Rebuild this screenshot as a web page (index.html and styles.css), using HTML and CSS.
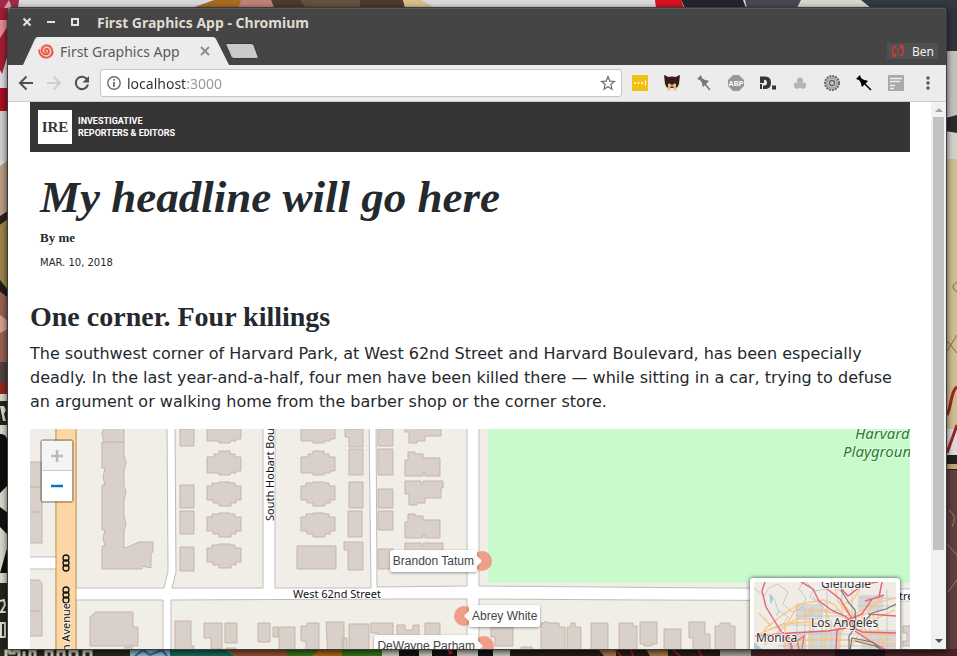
FILE: index.html
```html
<!DOCTYPE html>
<html lang="en">
<head>
<meta charset="utf-8">
<meta name="viewport" content="width=device-width, initial-scale=1">
<title>First Graphics App</title>
<link rel="stylesheet" href="styles.css">
</head>
<body>
<svg class="wallpaper" viewBox="0 0 957 656" preserveAspectRatio="none" aria-hidden="true">
  <rect width="957" height="656" fill="#d9d9dc"/>
  <!-- top strip -->
  <path d="M0 0h19l-1 8H0z" fill="#a02a48"/><path d="M9 0l3 8H4z" fill="#d9a0b0"/>
  <path d="M192 8l22-8h27v8z" fill="#a96b20"/><path d="M241 0h30l3 8h-36z" fill="#c08078"/><path d="M271 0h132l3 8H274z" fill="#4d3a2a"/><path d="M300 0h60v8h-54z" fill="#66503d"/><path d="M403 0h18l14 8h-30z" fill="#d9bd8b"/>
  <path d="M655 0h26l3 8h-28z" fill="#d8101c"/><path d="M681 0h62l3 8h-61z" fill="#24262c"/><path d="M745 0h56l-4 8h-50z" fill="#474a52"/><path d="M803 0h58l10 8h-74z" fill="#d7d5cf"/><path d="M861 0h96v8h-86z" fill="#333941"/>
  <!-- left strip -->
  <path d="M0 8h8v46l-6 20-2-4z" fill="#a41c34"/><path d="M0 20h8v6l-8 12z" fill="#e48a98"/><path d="M0 88h8v23H0z" fill="#a80f22"/><path d="M0 111h8v50H0z" fill="#cfcdcd"/>
  <path d="M0 166l8-6v60l-8 8z" fill="#b79c80"/><path d="M0 216l8-5v8l-8 6z" fill="#29201a"/><path d="M0 225l8-6v70l-8-5z" fill="#9c854b"/><path d="M0 280l8 10v8l-8-6z" fill="#251b17"/><path d="M0 292l8 6v65H0z" fill="#976051"/><path d="M0 315l8 6v8l-8 4z" fill="#d2a08a"/><path d="M0 362h8v20H0z" fill="#50413b"/><path d="M0 382h8v12H0z" fill="#8c2820"/><path d="M0 394h8v7H0z" fill="#d5d5c9"/><path d="M0 401h8v24H0z" fill="#1c2a1d"/><path d="M0 406h4l2 4-2 4 2 7H3z" fill="#dad9cc"/><path d="M0 425h8v231H0z" fill="#d6d7cb"/><path d="M0 434c8 0 8 8 8 15v36l-8 8z" fill="#0b100d"/><path d="M0 507l8 6v22l-8-8z" fill="#10130f"/><path d="M8 545v28H0z" fill="#0b100d"/><path d="M0 583h8v73H0z" fill="#23261d"/><path d="M0 601l4-1 1 5-4 7h5M1 623h4v14H1z" fill="none" stroke="#dadbc9" stroke-width="2"/>
  <!-- right strip -->
  <path d="M945 8h12v43h-12z" fill="#30343b"/><path d="M945 51h12v65h-12z" fill="#c2c1be"/><path d="M945 118l12-3v18l-12-2z" fill="#292b2c"/><path d="M945 133h12v26h-12z" fill="#d2d0ca"/><path d="M945 159h12v270h-12z" fill="#cdbc94"/><path d="M957 282q-8 5 0 10M947 341l10 12M957 335l-10 16" fill="none" stroke="#806743"/><path d="M947 415c4-6 4-25 10-28M947 453l10-28" fill="none" stroke="#9e281f" stroke-width="3"/><path d="M945 455h12v15h-12z" fill="#251f1e"/><path d="M945 464h12v5h-12z" fill="#c3a773"/><path d="M945 470h12v186h-12z" fill="#5e403d"/><path d="M949 510q9 6 3 17M947 544l10 11M957 580l-9 12" fill="none" stroke="#95817a"/>
  <!-- bottom strip -->
  <path d="M0 649h130v7H0z" fill="#27291f"/><path d="M6 656v-5h4v2h4v-2h5v5m5 0v-5m6 5v-5h5v5m11 0v-5h6v5m6 0v-5h6v5m6 0v-5h7v5m7 0v-5h7v5" fill="none" stroke="#d3d2bc" stroke-width="3"/><path d="M130 649h40v7h-40z" fill="#8db7cb"/><path d="M135 656l8-6 7 5 12-5 5 6" fill="none" stroke="#306d9d" stroke-width="2"/><path d="M170 649h55l10 7h-65z" fill="#126b58"/><path d="M225 649h62v7h-52z" fill="#955032"/><path d="M287 649h95v7h-95z" fill="#34761b"/><path d="M320 649h22v7h-30z" fill="#ad6416"/><path d="M382 649h128v7H382z" fill="#c9c8bd"/><path d="M399 649h20v7h-20zM432 649h25v7h-25zM478 649h15v7h-15z" fill="#101313"/><path d="M449 649l2 5" stroke="#be1822" stroke-width="4"/><path d="M510 649h210v7H510z" fill="#241c17"/><path d="M598 649h18v7h-12zM646 649h22v7h-18z" fill="#a67646"/><path d="M616 650l5 6m10-6 2 6m40-6 7 6m18-6 4 6" stroke="#981f17" stroke-width="2"/><path d="M720 649h31v7h-31z" fill="#a6a296"/><path d="M751 649h206v7H751z" fill="#4a2326"/><path d="M835 649h50v7h-50z" fill="#201619"/>
</svg>

<div class="window">
  <header class="titlebar">
    <button class="win-btn" aria-label="Close"><svg width="10" height="10" viewBox="0 0 10 10"><path d="M1.500 1.500l7 7m0-7l-7 7" stroke="#e4e3df" stroke-width="2"/></svg></button>
    <button class="win-btn" aria-label="Minimize"><svg width="10" height="10" viewBox="0 0 10 10"><path d="M1 5h8" stroke="#e4e3df" stroke-width="2"/></svg></button>
    <button class="win-btn" aria-label="Maximize"><svg width="10" height="10" viewBox="0 0 10 10"><path d="M2 2h6v6H2z" fill="none" stroke="#e4e3df" stroke-width="2"/></svg></button>
    <span class="window-title">First Graphics App - Chromium</span>
  </header>

  <div class="tabstrip">
    <div class="tab">
      <svg class="tab-shape" width="206" height="28" viewBox="0 0 206 28" aria-hidden="true"><path d="M0 28L12 2q1-2 3-2h175q2 0 3 2l13 26z" fill="#ececec"/></svg>
      <svg class="favicon" width="16" height="16" viewBox="0 0 16 16" aria-hidden="true"><circle cx="8" cy="8" r="7.300" fill="#f7cdc5"/><path d="M8.500 8.300c-.5 1-1.800.3-1.600-.9.200-1.800 2.700-2 3.600-.5 1.200 2-.4 4.500-2.900 4.400-3.200-.1-4.600-3.300-3.400-6 1.400-3 5.400-3.700 8-1.600 2.800 2.300 2.800 6.500.5 9M15 9c-.8 3.500-4 6-7.500 5.600C3.500 14.200.8 10.500 1.200 6.600" fill="none" stroke="#e75b4c" stroke-width="1.900"/></svg>
      <span class="tab-title">First Graphics App</span>
      <button class="tab-close" aria-label="Close tab"><svg width="10" height="10" viewBox="0 0 10 10"><path d="M1 1l8 8m0-8L1 9" stroke="#8b8b8b" stroke-width="1.800"/></svg></button>
    </div>
    <button class="new-tab" aria-label="New tab"><svg width="34" height="16" viewBox="0 0 34 16"><path d="M1 .5h25q2 0 3 2l4 11q.5 2-1.500 2H9q-2 0-3-2L1 2Q.5.500 1 .5z" fill="#c9c9c9" stroke="#3a3a3a"/></svg></button>
    <button class="profile"><svg width="14" height="12" viewBox="0 0 14 12" aria-hidden="true"><path d="M5 1C1 2 .5 8 3.500 10.500M1 11h3.500V8M9 11c4-1 4.500-7 1.500-9.500M13 1H9.500v3" fill="none" stroke="#d23a2b" stroke-width="1.300"/><path d="M7 3v4m0 1v1.500" stroke="#d23a2b" stroke-width="1.300"/></svg>Ben</button>
  </div>

  <nav class="toolbar" aria-label="Browser toolbar">
    <button class="tool" aria-label="Back"><svg width="16" height="16" viewBox="0 0 16 16"><path d="M15 8H2m6.500-6.500L2 8l6.500 6.500" fill="none" stroke="#505050" stroke-width="2"/></svg></button>
    <button class="tool" aria-label="Forward"><svg width="16" height="16" viewBox="0 0 16 16"><path d="M1 8h13M7.500 1.500L14 8l-6.500 6.500" fill="none" stroke="#cfcfcf" stroke-width="2"/></svg></button>
    <button class="tool" aria-label="Reload"><svg width="16" height="16" viewBox="0 0 16 16"><path d="M13.200 4.500A6.200 6.200 0 1 0 14 9.500" fill="none" stroke="#505050" stroke-width="2"/><path d="M15 1v6.500H8.500z" fill="#505050"/></svg></button>
    <div class="omnibox">
      <svg width="14" height="14" viewBox="0 0 14 14" aria-hidden="true"><circle cx="7" cy="7" r="6.200" fill="none" stroke="#6b6b6b" stroke-width="1.400"/><path d="M7 3v1.800M7 6v4.700" stroke="#6b6b6b" stroke-width="1.800"/></svg>
      <input class="url" type="text" value="localhost:3000" aria-label="Address">
      <button class="star" aria-label="Bookmark"><svg width="16" height="16" viewBox="0 0 16 16"><path d="M8 1.800l1.800 4.300 4.600.4-3.500 3.100 1 4.600L8 11.800l-3.900 2.400 1-4.600L1.600 6.500l4.600-.4z" fill="none" stroke="#707070" stroke-width="1.300"/></svg></button>
    </div>
    <div class="extensions">
      <button class="tool" aria-label="Password manager"><svg width="16" height="16" viewBox="0 0 16 16"><rect width="16" height="16" rx="1" fill="#f0c20f"/><circle cx="3" cy="8" r="1" fill="#fff"/><circle cx="6.500" cy="8" r="1" fill="#fff"/><circle cx="10" cy="8" r="1" fill="#fff"/><path d="M13.500 5.500v5" stroke="#fff"/></svg></button>
      <button class="tool" aria-label="Cat"><svg width="16" height="16" viewBox="0 0 16 16"><path d="M0 0q3 1 4 2 4-1 8 0 1-1 4-2l-1 9q-1 3-3 4H4Q2 12 1 9z" fill="#3a1b16"/><path d="M4 9l1-1 3 2 3-2 1 1v3H4z" fill="#c48d6d"/><path d="M4 9.500h2.500V11H4zm5.500 0H12V11H9.500z" fill="#e4ddd5"/><path d="M5.500 12l-1 3.500m6-3.500l1 3.500" stroke="#efbc96" stroke-width="3"/></svg></button>
      <button class="tool" aria-label="Pin"><svg width="16" height="16" viewBox="0 0 16 16"><path d="M1 4l4-4 1 3 3 2q2 0 4 1l-6 6q-1-2-1-4L4 5z" fill="#777"/><path d="M9 9l5 6" stroke="#777" stroke-width="1.500"/></svg></button>
      <button class="tool" aria-label="Ad blocker"><svg width="16" height="16" viewBox="0 0 16 16"><path d="M5 0h6l5 5v6l-5 5H5l-5-5V5z" fill="#969696"/><text x="8" y="11" text-anchor="middle" class="abp">ABP</text></svg></button>
      <button class="tool" aria-label="Disconnect"><svg width="18" height="16" viewBox="0 0 18 16"><path d="M1 1.500h5q6 0 6 6.200 0 6.300-6 6.300H4v-3.500q4 .5 4-2.800 0-3-3-3V8H1z" fill="#303639"/><path d="M1 9h2v5H1zM13 10.500h4v4h-4z" fill="#303639"/></svg></button>
      <button class="tool" aria-label="Clover"><svg width="16" height="16" viewBox="0 0 16 16"><g fill="#b4b4b4"><circle cx="8" cy="5.500" r="3"/><circle cx="5" cy="10.500" r="3.200"/><circle cx="11" cy="10.500" r="3.200"/><path d="M6 6h4v7H6z"/></g></svg></button>
      <button class="tool" aria-label="Gear"><svg width="16" height="16" viewBox="0 0 16 16"><circle cx="8" cy="8" r="7" fill="#c2c2c2" stroke="#666" stroke-width="2" stroke-dasharray="2 1"/><circle cx="8" cy="8" r="5" fill="none" stroke="#999"/><circle cx="8" cy="8" r="2.500" fill="#ccc" stroke="#666" stroke-width="1.300"/></svg></button>
      <button class="tool" aria-label="Pin page"><svg width="16" height="16" viewBox="0 0 16 16"><path d="M0 4l4-4 1 3 3 2q2 0 4 1l-6 6q-1-2-1-4L3 5z" fill="#000"/><path d="M8 8l7 7" stroke="#000" stroke-width="1.500"/></svg></button>
      <button class="tool" aria-label="Reader"><svg width="16" height="16" viewBox="0 0 16 16"><rect width="16" height="16" rx="1" fill="#a9a9a9"/><path d="M2 3.500h12M2 6.500h10M2 10.500h5M2 13.500h4" stroke="#eee" stroke-width="1.500"/></svg></button>
      <button class="tool" aria-label="Menu"><svg width="16" height="16" viewBox="0 0 16 16"><g fill="#555"><circle cx="8" cy="3" r="1.700"/><circle cx="8" cy="8" r="1.700"/><circle cx="8" cy="13" r="1.700"/></g></svg></button>
    </div>
  </nav>

  <div class="viewport">
    <main class="page">
      <div class="brandbar">
        <a class="brand" href="#"><span class="brand-mark">IRE</span><span class="brand-name">INVESTIGATIVE<br>REPORTERS &amp; EDITORS</span></a>
      </div>
      <header class="story-head">
        <h1>My headline will go here</h1>
        <p class="byline">By me</p>
        <p class="date">MAR. 10, 2018</p>
      </header>
      <section class="story">
        <h2>One corner. Four killings</h2>
        <p>The southwest corner of Harvard Park, at West 62nd Street and Harvard Boulevard, has been especially deadly. In the last year-and-a-half, four men have been killed there — while sitting in a car, trying to defuse an argument or walking home from the barber shop or the corner store.</p>
      </section>
      <div class="map">
        <svg class="tiles" viewBox="30 429 880 220" preserveAspectRatio="xMinYMin slice" role="img" aria-label="Street map">
          <defs>
            <path id="house-a" d="M-17-7h7v-3h5v-3H6v3h5v3h6V7h-5v2H6v2H-5V9h-12z"/>
            <path id="house-b" d="M-17-8h5v-3h7v-1H6v1h5v3h6V6h-5v3H7v3H-5V9h-6V6h-6z"/>
            <path id="house-c" d="M-16-12h7v2h8v4h17V12H1V9h-2v3h-18V-4h3z"/>
            <path id="house-d" d="M-19-12h16v3h2v-3h20v7h-2V5H1v5h-8v2h-8v-11h-4z"/>
          </defs>
          <rect x="30" y="429" width="880" height="220" fill="#fff"/>
          <g fill="#f1eee8" stroke="#bdbdbd">
            <path d="M20 420h36v137H20zM20 569h36v90H20z"/>
            <path d="M76 420h91l1 151-4 17H76z"/>
            <path d="M175 420h88v168h-91l4-16z"/>
            <path d="M275 420h94l2 168h-96z"/>
            <path d="M376 420h91v166l-90 1z"/>
            <path d="M479 420h441v169l-200-1-241-2z"/>
            <path d="M76 600h87v60H76z"/>
            <path d="M171 600l222-1h74v61H171z"/>
            <path d="M479 599l170 1 271 1v60H479z"/>
          </g>
          <path d="M56 429h20v220H56" fill="#fcd6a4"/><path d="M56 429v220M76 429v220" stroke="#c5974c"/>
          <path d="M488 429h422v154H488z" fill="#c8facc"/>
          <g fill="#d9d0c9" stroke="#c5b5a9">
            <path d="M20 462h22v81H20zM20 487h22M20 512h22M20 580h19l3 3v53H20zM20 611h22"/>
            <path d="M105 420h19v35l2 8-2 7v16l2 6-2 8v16l2 8-2 7v17l4-1 11-5h14v10l-2 1v15l-9-2v3h-40v-23h3l-2-8 2-8h-3v-45h3l-2-8 2-9h-3v-26h2l-2-8zM104 442h20"/>
            <path d="M96 612h37v15h5v19H90v-29zM125 650v-3h7v3z"/>
            <path d="M180 429h14v17h-14zM180 485h14v23h-14zM180 511h14v23h-14zM180 547h14v24h-14z"/>
            <use href="#house-a" x="224" y="432"/><use href="#house-a" x="224" y="464"/><use href="#house-b" x="224" y="494"/><use href="#house-b" x="224" y="525"/><use href="#house-b" x="224" y="556"/>
            <use href="#house-a" x="318" y="432"/><use href="#house-a" x="318" y="464"/><use href="#house-b" x="318" y="494"/><use href="#house-b" x="318" y="525"/>
            <path d="M297 546h39v23h-39zM345 429h18v18h-14v-10h-4zM349 449h14v26h-14zM349 482h14v26h-14zM348 511h14v26h-14zM344 542h19v28h-15v-20h-4z"/>
            <path d="M378 429h15v17h-15zM378 449h15v26h-15zM378 489h15v19h-15zM378 511h15v19h-15zM378 549h15v20h-15z"/>
            <use href="#house-d" x="424" y="431"/><use href="#house-c" x="424" y="464"/><use href="#house-d" x="424" y="493"/><use href="#house-c" x="424" y="526"/><use href="#house-d" x="424" y="555"/>
            <path d="M204 623h18v26h-11v-11h-7zM225 623h12v20h-12zM175 621h16v25h3v10h-19zM226 648h10v8h-10z"/>
            <path d="M258 623h12v19h-12zM273 627h5v10h-5zM279 627h16v30h-16zM301 626h6v-3h12v34h-13v-16h-5zM326 622h18v17l-2 18h-14zM342 638h5v18h-5zM349 624h20v33h-20zM371 623h22v35h-15v-25h-7zM397 625h8v5h8v-5h6v34h-22zM425 623h15v34h-12v-14h-3z"/>
            <path d="M491 627h22v19h-18v-9h-4zM541 623h3v-1h4v1h11v4h6v30h-24zM567 627h4v-4h4v4h6v30h-14zM591 623h17v35h-17zM619 623h14v3h4v31h-18zM640 622h17v22h-5v2h-8v-2h-4zM664 629h17v28h-17zM689 622h16v12h5v24h-17v-20h-4zM715 626h5v-3h10v3h5v33h-20zM521 647h11v8h-11zM903 626h8v20h-8v-5h4v-8h-4z"/>
          </g>
          <g fill="none" stroke="#111" stroke-width="1.300"><rect x="63" y="555" width="6" height="6" rx="3"/><rect x="63" y="560" width="6" height="6" rx="3"/><rect x="63" y="565" width="6" height="6" rx="3"/><rect x="63" y="587" width="6" height="6" rx="3"/><rect x="63" y="592" width="6" height="6" rx="3"/><rect x="63" y="597" width="6" height="6" rx="3"/></g>
          <g class="street">
            <text x="337" y="598" text-anchor="middle">West 62nd Street</text>
            <text x="893" y="600">Street</text>
            <text transform="translate(274 521) rotate(-90)">South Hobart Boulevard</text>
            <text transform="translate(70 603) rotate(-90)" text-anchor="end">Western Avenue</text>
          </g>
          <g class="park"><text x="855" y="439">Harvard</text><text x="843" y="457">Playground</text></g>
          <g fill="#ee8f75" fill-opacity=".85"><circle cx="482" cy="561" r="10"/><circle cx="464" cy="616" r="10"/><circle cx="484" cy="646" r="10"/></g>
        </svg>
        <div class="zoom">
          <button class="zoom-btn" disabled aria-label="Zoom in"><svg width="12" height="12" viewBox="0 0 12 12"><path d="M6 0v12M0 6h12" stroke="#bbb" stroke-width="2.500"/></svg></button>
          <button class="zoom-btn" aria-label="Zoom out"><svg width="12" height="12" viewBox="0 0 12 12"><path d="M0 6h12" stroke="#0078c0" stroke-width="2.500"/></svg></button>
        </div>
        <span class="tip tip-left tip-tatum">Brandon Tatum</span>
        <span class="tip tip-right tip-white">Abrey White</span>
        <span class="tip tip-left tip-parham">DeWayne Parham</span>
        <div class="minimap">
          <svg viewBox="754 582 142 142" width="142" height="142" role="img" aria-label="Los Angeles overview map">
            <rect x="754" y="582" width="142" height="142" fill="#efece6"/>
            <g fill="#d8d7d4"><path d="M796 604h26v16h-26zM808 630h32v20h-32zM858 595h25v16h-25zM783 634h23v15h-23zM863 630h33v20h-33z"/></g>
            <path d="M754 642l8 7v5h-8z" fill="#a8ccdb"/><path d="M770 594l3 4-2 5zM853 583l4 2M837 589l5 3M779 611l-3 5" stroke="#9acbe0" stroke-width="1" fill="#9acbe0"/>
            <g fill="none" stroke="#c8c8c8"><path d="M754 588l10 8 5-8 9-4 10 8-5 12 9 8 11-5 3-9-7-9 4-7 10 7-3 8 12 8 9-4M774 598l4 12 10 7-6 9-12 3M813 596l10 11 8 15M806 582l9 9 12-2M827 582v25M832 587h20v29M842 582v36M797 604v47M805 607v43M813 607v43M822 607v43M796 610h42M796 616h54M784 625h66M784 634h110M780 640h110M778 646h117M831 620v31M840 620v31M862 610v40M870 606v44M878 605v44M887 590v60M860 598h35M858 606h38"/></g>
            <g fill="none" stroke="#fac57f" stroke-width="1.300"><path d="M755 646l11-18 15-12 18-12 24-4 12 5 17 22 17 7 28 2M759 634l24-10 26-2 31 7 20-3 35-16M764 645l22-20 28-15 27 4 18 13M785 649v-22l14-23M810 651v-43M825 651l2-46M838 651l3-18 13-18 20-12 22-5M834 583l4 18 14 18 15-6 12-13 3-18M842 605l11-5 10-16M850 649l12-20M870 649l-5-20-20-23M884 646l-12-33M791 641l40-2 65 5M759 613l12 13"/></g>
            <g fill="none" stroke="#e4647f" stroke-width="1.400"><path d="M765 582l-3 9 4 16 11 18 7 11 8 10v5M801 582l12 7 6 12 14 10 12 5 8 7M822 585l18 14 11 18 2 11 9 4 34 1M755 636l35-3 38-2 18-3M836 651l1-20 10-11 15-6 10-15 12-4M838 585l10 11 16-12 14-2M882 582l-3 15-14 4M855 631l15 10 18 10M868 614l28 2"/></g>
            <path d="M799 649l-2-8 7-5-2 13M784 641l2-4 5 1v12" fill="none" stroke="#ed705f" stroke-width="1.300"/>
            <g fill="none" stroke="#777" stroke-width="1.200"><path d="M841 590l8 13 6 7 1 16-7 10v15M850 650l2-12 20 4 10 8M860 627l12-14 14-4 10-5M855 641l20 5 10 5"/></g>
            <g class="city"><text x="821" y="588">Glendale</text><text x="811" y="627">Los Angeles</text><text x="756" y="642">Monica</text></g>
          </svg>
        </div>
      </div>
    </main>
    <div class="scrollbar" aria-hidden="true"><i class="arrow up"></i><i class="thumb"></i><i class="arrow down"></i></div>
  </div>
</div>
</body>
</html>
```
FILE: styles.css
```css
* { box-sizing: border-box; }
html, body { height: 100%; }
body {
  margin: 0;
  padding: 8px 11px 7px 8px;
  overflow: hidden;
  font-family: "DejaVu Sans", sans-serif;
  color: #24292e;
}
button { padding: 0; border: 0; background: none; font: inherit; color: inherit; display: flex; align-items: center; justify-content: center; }
svg { display: block; flex: none; }
h1, h2, p { margin: 0; }

.wallpaper { position: absolute; inset: 0; width: 100%; height: 100%; z-index: -1; }

.window {
  height: 100%;
  display: flex;
  flex-direction: column;
  background: #fff;
  border-radius: 4px 4px 0 0;
  overflow: hidden;
  box-shadow: 0 0 0 1px #3b3b3b, 0 2px 6px 1px rgba(0, 0, 0, .7);
}

.titlebar {
  height: 29px;
  padding: 0 14px 2px;
  display: flex;
  align-items: center;
  gap: 14px;
  background: #454545;
  border-top: 1px solid #5a5a5a;
  color: #dfdbd2;
  font: bold 14px "Noto Sans", sans-serif;
}
.win-btn { width: 10px; height: 10px; }
.window-title { margin-left: 3px; }

.tabstrip {
  height: 28px;
  padding: 0 8px 0 15px;
  display: flex;
  align-items: center;
  background: #454545;
  font: 14px "Noto Sans", sans-serif;
}
.tab {
  position: relative;
  width: 206px;
  height: 28px;
  padding: 0 19px 0 15px;
  display: flex;
  align-items: center;
  gap: 6px;
  color: #5a5a5a;
}
.tab-shape { position: absolute; inset: 0; }
.favicon, .tab-title, .tab-close { position: relative; }
.tab-title { flex: 1; white-space: nowrap; }
.tab-close { width: 10px; height: 10px; }
.new-tab { margin-left: -4px; }
.profile {
  height: 16px;
  margin-left: auto;
  padding: 0 4px;
  gap: 7px;
  background: #505050;
  color: #f1f1f1;
  font-size: 12px;
}

.toolbar {
  height: 37px;
  padding: 0 10px;
  display: flex;
  align-items: center;
  gap: 12px;
  background: #ececec;
  border-bottom: 1px solid #cbcbcb;
}
.tool { width: 16px; height: 16px; }
.omnibox {
  flex: 1;
  height: 28px;
  margin-left: -2px;
  padding: 0 5px 0 6px;
  display: flex;
  align-items: center;
  gap: 6px;
  background: #fff;
  border: 1px solid #c5c5c5;
  border-radius: 3px;
}
.url {
  flex: 1;
  min-width: 0;
  padding: 0;
  border: 0;
  outline: 0;
  font: 14px "Noto Sans", sans-serif;
  color: transparent;
  background: linear-gradient(90deg, #303030 60px, #969696 60px);
  -webkit-background-clip: text;
  background-clip: text;
}
.extensions { display: flex; gap: 16px; margin-left: -2px; }
.abp { font: bold 7px "Liberation Sans", sans-serif; fill: #fff; }

.viewport { flex: 1; min-height: 0; display: flex; }
.page {
  flex: 1;
  min-width: 0;
  padding: 0 21px 0 22px;
  display: flex;
  flex-direction: column;
}

.brandbar { padding: 8px; background: #373435; }
.brand { display: flex; align-items: center; gap: 6px; color: #fff; text-decoration: none; }
.brand-mark {
  width: 34px;
  height: 34px;
  background: #fff;
  color: #373435;
  text-align: center;
  font: bold 15px/34px "Liberation Serif", serif;
}
.brand-name { font: bold 9px/12px Roboto, sans-serif; }

.story-head { padding: 20px 10px 0; }
h1 { font: italic bold 45px/50px "Liberation Serif", serif; }
.byline { margin-top: 8px; font: bold 13px/16px "Liberation Serif", serif; }
.date { margin-top: 9px; font-size: 10px; line-height: 16px; }

.story { padding: 29px 0 15px; }
h2 { font: bold 28px/34px "Liberation Serif", serif; }
.story p { margin-top: 8px; font-size: 16px; line-height: 24px; }

.map { position: relative; flex: 1; min-height: 0; overflow: hidden; }
.tiles { width: 100%; height: 100%; }
.street { font: 11px "Noto Sans", sans-serif; fill: #111; stroke: #fff; stroke-width: 2px; stroke-opacity: .6; paint-order: stroke; }
.park { font: italic 15px "Noto Sans", sans-serif; fill: #22802c; stroke: #fff; stroke-width: 2px; stroke-opacity: .5; paint-order: stroke; }
.city { font: 12px "Noto Sans", sans-serif; fill: #333; stroke: #fff; stroke-width: 2px; stroke-opacity: .7; paint-order: stroke; }

.zoom {
  position: absolute;
  left: 10px;
  top: 10px;
  border: 2px solid rgba(0, 0, 0, .25);
  border-radius: 4px;
  background-clip: padding-box;
}
.zoom-btn { width: 30px; height: 30px; background: #fff; }
.zoom-btn:disabled { background: #f4f4f4; border-bottom: 1px solid #ccc; }

.tip {
  position: absolute;
  height: 22px;
  padding: 0 3px;
  background: rgba(255, 255, 255, .93);
  border-radius: 3px;
  box-shadow: 0 1px 3px rgba(0, 0, 0, .4);
  color: #444;
  font: 12px/22px "Liberation Sans", sans-serif;
  white-space: nowrap;
}
.tip::after { content: ""; position: absolute; top: 6px; border: 5px solid transparent; }
.tip-left::after { left: 100%; border-left-color: #fff; }
.tip-right::after { right: 100%; border-right-color: #fff; }
.tip-tatum { right: 433px; top: 121px; }
.tip-white { left: 439px; top: 176px; }
.tip-parham { right: 432px; top: 206px; }

.minimap {
  position: absolute;
  right: 10px;
  top: 149px;
  padding: 4px;
  background: #fff;
  border-radius: 3px;
  box-shadow: 0 0 4px rgba(0, 0, 0, .7);
}

.scrollbar {
  width: 15px;
  padding: 6px 2px;
  display: flex;
  flex-direction: column;
  align-items: center;
  background: #f1f1f1;
}
.arrow { border: 4px solid transparent; }
.up { margin-top: -4px; border-bottom-color: #a3a3a3; }
.down { margin: auto 0 -4px; border-top-color: #505050; }
.thumb { width: 100%; flex: 0 0 81%; margin-top: 5px; background: #c1c1c1; }
```
